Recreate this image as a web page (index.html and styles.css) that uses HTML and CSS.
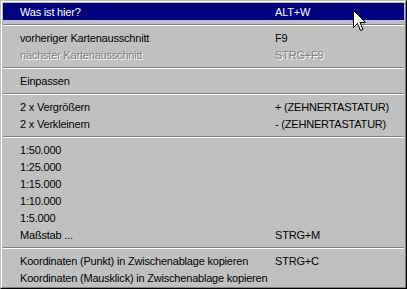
FILE: index.html
```
<!DOCTYPE html>
<html>
  <head>
    <title>Kontextmenü</title>
    <meta charset="UTF-8"/>
    <link rel="stylesheet" href="styles.css">
  </head>
  <body>
    <div class="menu">
      <div class="menu-inner">
        <div class="item active"><span class="label">Was ist hier?</span><span class="key">ALT+W</span></div>
        <div class="sep"></div>
        <div class="item"><span class="label">vorheriger Kartenausschnitt</span><span class="key">F9</span></div>
        <div class="item disabled"><span class="label">nächster Kartenausschnitt</span><span class="key">STRG+F9</span></div>
        <div class="sep"></div>
        <div class="item"><span class="label">Einpassen</span></div>
        <div class="sep"></div>
        <div class="item"><span class="label">2 x Vergrößern</span><span class="key">+ (ZEHNERTASTATUR)</span></div>
        <div class="item"><span class="label">2 x Verkleinern</span><span class="key">- (ZEHNERTASTATUR)</span></div>
        <div class="sep"></div>
        <div class="item"><span class="label">1:50.000</span></div>
        <div class="item"><span class="label">1:25.000</span></div>
        <div class="item"><span class="label">1:15.000</span></div>
        <div class="item"><span class="label">1:10.000</span></div>
        <div class="item"><span class="label">1:5.000</span></div>
        <div class="item"><span class="label">Maßstab ...</span><span class="key">STRG+M</span></div>
        <div class="sep"></div>
        <div class="item"><span class="label">Koordinaten (Punkt) in Zwischenablage kopieren</span><span class="key">STRG+C</span></div>
        <div class="item"><span class="label">Koordinaten (Mausklick) in Zwischenablage kopieren</span></div>
      </div>
      <!-- mouse pointer over the first entry -->
      <svg class="cursor" width="14" height="23" viewBox="0 0 14 23">
        <path d="M0.5 0.5 L0.5 17.5 L4.5 13.5 L7.5 20.5 L10 19.5 L7 12.5 L12.5 12.5 Z" fill="#fff" stroke="#000" stroke-width="1"/>
      </svg>
    </div>
  </body>
</html>
```
FILE: styles.css
```
body {
  margin: 0;
  background-color: #c0c0c0;
  font-family: "Liberation Sans", Arial, sans-serif;
  font-size: 11px;
  letter-spacing: -0.2px;
}
.menu {
  position: relative;
  width: 407px;
  height: 289px;
  box-sizing: border-box;
  border: 1px solid;
  border-color: #c0c0c0 #000 #000 #c0c0c0;
  background-color: #c0c0c0;
}
.menu-inner {
  height: 100%;
  box-sizing: border-box;
  border: 1px solid;
  border-color: #fff #808080 #808080 #fff;
  padding: 1px;
}
.item {
  display: flex;
  align-items: center;
  height: 17px;
  padding-left: 17px;
  color: #000;
  white-space: nowrap;
}
.label {
  width: 255px;
  flex-shrink: 0;
}
.active {
  background-color: #000080;
  color: #fff;
}
.disabled {
  color: #808080;
  text-shadow: 1px 1px 0 #fff;
}
.sep {
  height: 9px;
  display: flex;
  flex-direction: column;
  justify-content: center;
}
.sep::before {
  content: "";
  display: block;
  height: 0;
  margin-top: 1px;
  border-top: 1px solid #808080;
  border-bottom: 1px solid #fff;
}
.cursor {
  position: absolute;
  left: 352px;
  top: 9px;
}
```
